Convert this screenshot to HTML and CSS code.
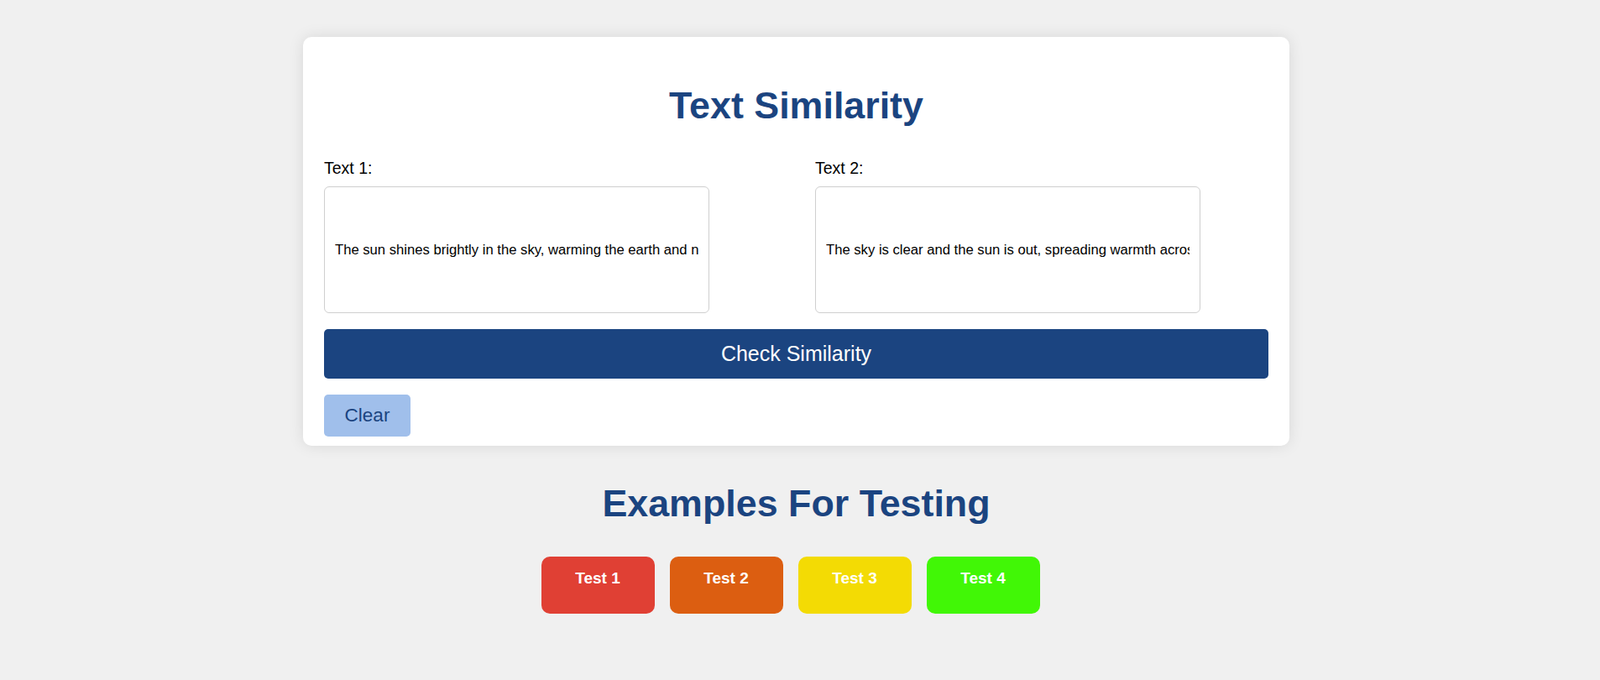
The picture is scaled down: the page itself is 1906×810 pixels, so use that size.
FILE: index.html
```html
<!DOCTYPE html>
<html lang="en">
<head>
<meta charset="utf-8">
<title>Text Similarity</title>
<link rel="stylesheet" href="styles.css">
</head>
<body>
<div class="card">
  <h1 class="title">Text Similarity</h1>
  <div class="fields">
    <div class="field">
      <label class="label" for="t1">Text 1:</label>
      <input class="text-input" id="t1" type="text" value="The sun shines brightly in the sky, warming the earth and nurturing life.">
    </div>
    <div class="field">
      <label class="label" for="t2">Text 2:</label>
      <input class="text-input" id="t2" type="text" value="The sky is clear and the sun is out, spreading warmth across the land.">
    </div>
  </div>
  <button class="check-btn" type="button">Check Similarity</button>
  <button class="clear-btn" type="button">Clear</button>
</div>
<h2 class="examples-title">Examples For Testing</h2>
<div class="tests">
  <button class="test-btn red" type="button">Test 1</button>
  <button class="test-btn orange" type="button">Test 2</button>
  <button class="test-btn yellow" type="button">Test 3</button>
  <button class="test-btn green" type="button">Test 4</button>
</div>
</body>
</html>
```
FILE: styles.css
```css
html, body {
  margin: 0;
  background: #f0f0f0;
}
body {
  padding: 44px 9px 0 0;
  font-family: "Liberation Sans", Arial, sans-serif;
  color: #000;
}
.card {
  width: 1125px;
  margin: 0 auto;
  padding: 25px 25px 11px;
  background: #fff;
  border-radius: 10px;
  box-shadow: 0 0 18px rgba(0, 0, 0, 0.1);
}
.title {
  margin: 31px 0 38px;
  font-size: 44.8px;
  line-height: 51px;
  font-weight: bold;
  text-align: center;
  color: #1b4480;
}
.fields {
  display: grid;
  grid-template-columns: 540px 540px;
  column-gap: 45px;
}
.label {
  display: block;
  font-size: 19.5px;
  line-height: 22px;
  margin-bottom: 11px;
}
.text-input {
  box-sizing: border-box;
  display: block;
  width: 459px;
  height: 151px;
  padding: 0 12px;
  border: 1px solid #cfcfcf;
  border-radius: 6px;
  font-family: "Liberation Sans", Arial, sans-serif;
  font-size: 16.65px;
  color: #000;
  background: #fff;
  outline: none;
}
.check-btn {
  display: block;
  width: 100%;
  height: 59px;
  margin-top: 19px;
  border: none;
  border-radius: 5px;
  background: #1b4480;
  color: #fff;
  font-family: "Liberation Sans", Arial, sans-serif;
  font-size: 25px;
  padding: 0;
}
.clear-btn {
  display: block;
  width: 103px;
  height: 50px;
  margin-top: 19px;
  padding: 0;
  border: none;
  border-radius: 5px;
  background: #a0bfeb;
  color: #1b4480;
  font-family: "Liberation Sans", Arial, sans-serif;
  font-size: 22.5px;
}
.examples-title {
  margin: 43px 0 38px;
  font-size: 44.8px;
  line-height: 51px;
  font-weight: bold;
  text-align: center;
  color: #1b4480;
}
.tests {
  display: flex;
  justify-content: center;
  gap: 4px;
}
.test-btn {
  box-sizing: border-box;
  width: 135px;
  height: 68px;
  margin-right: 14px;
  padding: 15px 0 0;
  border: none;
  border-radius: 10px;
  color: #fff;
  font-family: "Liberation Sans", Arial, sans-serif;
  font-size: 19px;
  line-height: 21px;
  font-weight: bold;
  text-align: center;
  display: flex;
  justify-content: center;
  align-items: flex-start;
}
.red { background: #e04034; }
.orange { background: #dc5e11; }
.yellow { background: #f3db04; }
.green { background: #41f706; }
```
